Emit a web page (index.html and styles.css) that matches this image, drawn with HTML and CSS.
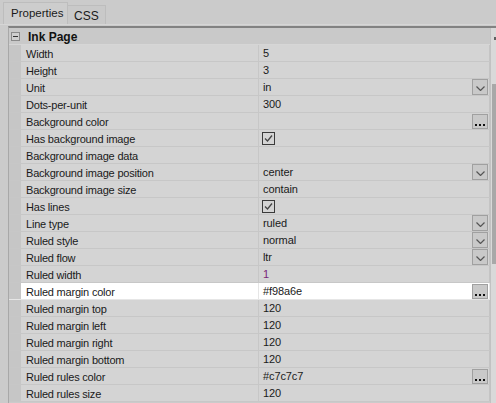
FILE: index.html
```html
<!DOCTYPE html>
<html>
<head>
<meta charset="utf-8">
<link rel="stylesheet" href="styles.css">
</head>
<body>
<div class="tabs">
  <div class="tab active">Properties</div>
  <div class="tab">CSS</div>
</div>
<div class="grid">
  <div class="rows">
    <div class="cat"><span class="minus"></span><b>Ink Page</b></div>
    <div class="row"><div class="indent"></div><div class="name">Width</div><div class="val">5</div></div>
    <div class="row"><div class="indent"></div><div class="name">Height</div><div class="val">3</div></div>
    <div class="row"><div class="indent"></div><div class="name">Unit</div><div class="val">in<span class="dd"><svg width="9" height="5" viewBox="0 0 9 5"><path d="M0.5 0.5 L4.5 4.5 L8.5 0.5" fill="none" stroke="#555" stroke-width="1.2"/></svg></span></div></div>
    <div class="row"><div class="indent"></div><div class="name">Dots-per-unit</div><div class="val">300</div></div>
    <div class="row"><div class="indent"></div><div class="name">Background color</div><div class="val"><span class="ell"><i></i><i></i><i></i></span></div></div>
    <div class="row"><div class="indent"></div><div class="name">Has background image</div><div class="val"><span class="cb"><svg width="11" height="11" viewBox="0 0 11 11"><path d="M2 5.5 L4.5 8 L9 2.5" fill="none" stroke="#444" stroke-width="1.3"/></svg></span></div></div>
    <div class="row"><div class="indent"></div><div class="name">Background image data</div><div class="val"></div></div>
    <div class="row"><div class="indent"></div><div class="name">Background image position</div><div class="val">center<span class="dd"><svg width="9" height="5" viewBox="0 0 9 5"><path d="M0.5 0.5 L4.5 4.5 L8.5 0.5" fill="none" stroke="#555" stroke-width="1.2"/></svg></span></div></div>
    <div class="row"><div class="indent"></div><div class="name">Background image size</div><div class="val">contain</div></div>
    <div class="row"><div class="indent"></div><div class="name">Has lines</div><div class="val"><span class="cb"><svg width="11" height="11" viewBox="0 0 11 11"><path d="M2 5.5 L4.5 8 L9 2.5" fill="none" stroke="#444" stroke-width="1.3"/></svg></span></div></div>
    <div class="row"><div class="indent"></div><div class="name">Line type</div><div class="val">ruled<span class="dd"><svg width="9" height="5" viewBox="0 0 9 5"><path d="M0.5 0.5 L4.5 4.5 L8.5 0.5" fill="none" stroke="#555" stroke-width="1.2"/></svg></span></div></div>
    <div class="row"><div class="indent"></div><div class="name">Ruled style</div><div class="val">normal<span class="dd"><svg width="9" height="5" viewBox="0 0 9 5"><path d="M0.5 0.5 L4.5 4.5 L8.5 0.5" fill="none" stroke="#555" stroke-width="1.2"/></svg></span></div></div>
    <div class="row"><div class="indent"></div><div class="name">Ruled flow</div><div class="val">ltr<span class="dd"><svg width="9" height="5" viewBox="0 0 9 5"><path d="M0.5 0.5 L4.5 4.5 L8.5 0.5" fill="none" stroke="#555" stroke-width="1.2"/></svg></span></div></div>
    <div class="row"><div class="indent"></div><div class="name">Ruled width</div><div class="val purple">1</div></div>
    <div class="row sel"><div class="indent"></div><div class="name">Ruled margin color</div><div class="val">#f98a6e<span class="ell"><i></i><i></i><i></i></span></div></div>
    <div class="row"><div class="indent"></div><div class="name">Ruled margin top</div><div class="val">120</div></div>
    <div class="row"><div class="indent"></div><div class="name">Ruled margin left</div><div class="val">120</div></div>
    <div class="row"><div class="indent"></div><div class="name">Ruled margin right</div><div class="val">120</div></div>
    <div class="row"><div class="indent"></div><div class="name">Ruled margin bottom</div><div class="val">120</div></div>
    <div class="row"><div class="indent"></div><div class="name">Ruled rules color</div><div class="val">#c7c7c7<span class="ell"><i></i><i></i><i></i></span></div></div>
    <div class="row"><div class="indent"></div><div class="name">Ruled rules size</div><div class="val">120</div></div>
  </div>
  <div class="scroll"><div class="arrow"></div><div class="thumb"></div></div>
</div>
</body>
</html>
```

FILE: styles.css
```css
* { box-sizing: border-box; }
html, body { margin: 0; padding: 0; }
body {
  background: #cbcbcb;
  font-family: "Liberation Sans", Arial, sans-serif;
  font-size: 11px;
  color: #1a1a1a;
  width: 496px;
  height: 403px;
  overflow: hidden;
}
.tabs {
  height: 25px;
  display: flex;
  align-items: flex-end;
  padding-left: 3px;
  border-bottom: 1px solid #d6d6d6;
}
.tab {
  height: 19px;
  padding: 3px 0 0 6px;
  width: 38px;
  border: 1px solid #bdbdbd;
  border-bottom: none;
  border-left: none;
  background: #c9c9c9;
  font-size: 12px;
}
.tab.active {
  height: 22px;
  width: 65px;
  padding: 4px 0 0 7px;
  border-left: 1px solid #bdbdbd;
  background: #cdcdcd;
  font-size: 11.5px;
}
.grid {
  margin-top: 1px;
  margin-left: 8px;
  border-top: 2px solid #828282;
  border-left: 1px solid #a8a8a8;
  display: flex;
  height: 378px;
}
.rows { flex: 1; }
.cat {
  height: 17px;
  display: flex;
  align-items: center;
  background: #c9c9c9;
  border-bottom: 1px solid #d6d6d6;
  font-size: 12px;
  color: #111;
  padding-top: 1px;
}
.cat b { margin-left: 8px; }
.minus {
  margin-left: 2px;
  width: 9px;
  height: 9px;
  border: 1px solid #8a8a8a;
  position: relative;
  background: #cfcfcf;
}
.minus::after {
  content: "";
  position: absolute;
  left: 1px; top: 3px;
  width: 5px; height: 1px;
  background: #333;
}
.row {
  height: 17px;
  display: flex;
  border-bottom: 1px solid #c7c7c7;
}
.indent {
  width: 12px;
  background: #c6c6c6;
  flex: none;
}
.name {
  width: 238px;
  flex: none;
  background: #d4d4d4;
  border-right: 1px solid #c7c7c7;
  padding: 1px 0 0 5px;
  line-height: 16px;
  letter-spacing: -0.2px;
  white-space: nowrap;
  overflow: hidden;
}
.val {
  flex: 1;
  background: #d4d4d4;
  padding: 1px 0 0 4px;
  line-height: 15px;
  letter-spacing: -0.1px;
  display: flex;
  align-items: center;
  position: relative;
  border-right: 1px solid #c4c4c4;
}
.purple { color: #7a2478; }
.row.sel { border-bottom-color: #e6e6e6; }
.row.sel .name, .row.sel .val { background: #ffffff; border-right-color: #e6e6e6; }
.dd, .ell {
  position: absolute;
  right: 1px;
  top: 0;
  width: 16px;
  height: 16px;
  border: 1px solid #a0a0a0;
  background: #c9c9c9;
  display: flex;
  align-items: center;
  justify-content: center;
}
.dd svg { margin-top: 2px; }
.ell {
  top: 1px;
  height: 15px;
  align-items: flex-end;
  gap: 2px;
  padding-bottom: 2px;
}
.ell i {
  display: block;
  width: 2px;
  height: 2px;
  background: #111;
}
.cb {
  width: 13px;
  height: 13px;
  border: 1px solid #3a3a3a;
  display: flex;
  align-items: center;
  justify-content: center;
  margin: -1px 0 0 -1px;
}
.scroll {
  width: 6px;
  flex: none;
  background: #d9d9d9;
  border-left: 1px solid #c2c2c2;
  position: relative;
}
.arrow {
  position: absolute;
  left: 3px; top: 9px;
  width: 3px; height: 3px;
  background: #606060;
}
.thumb {
  position: absolute;
  left: 1px; right: 0;
  top: 56px;
  height: 180px;
  background: #a8a8a8;
}
```
